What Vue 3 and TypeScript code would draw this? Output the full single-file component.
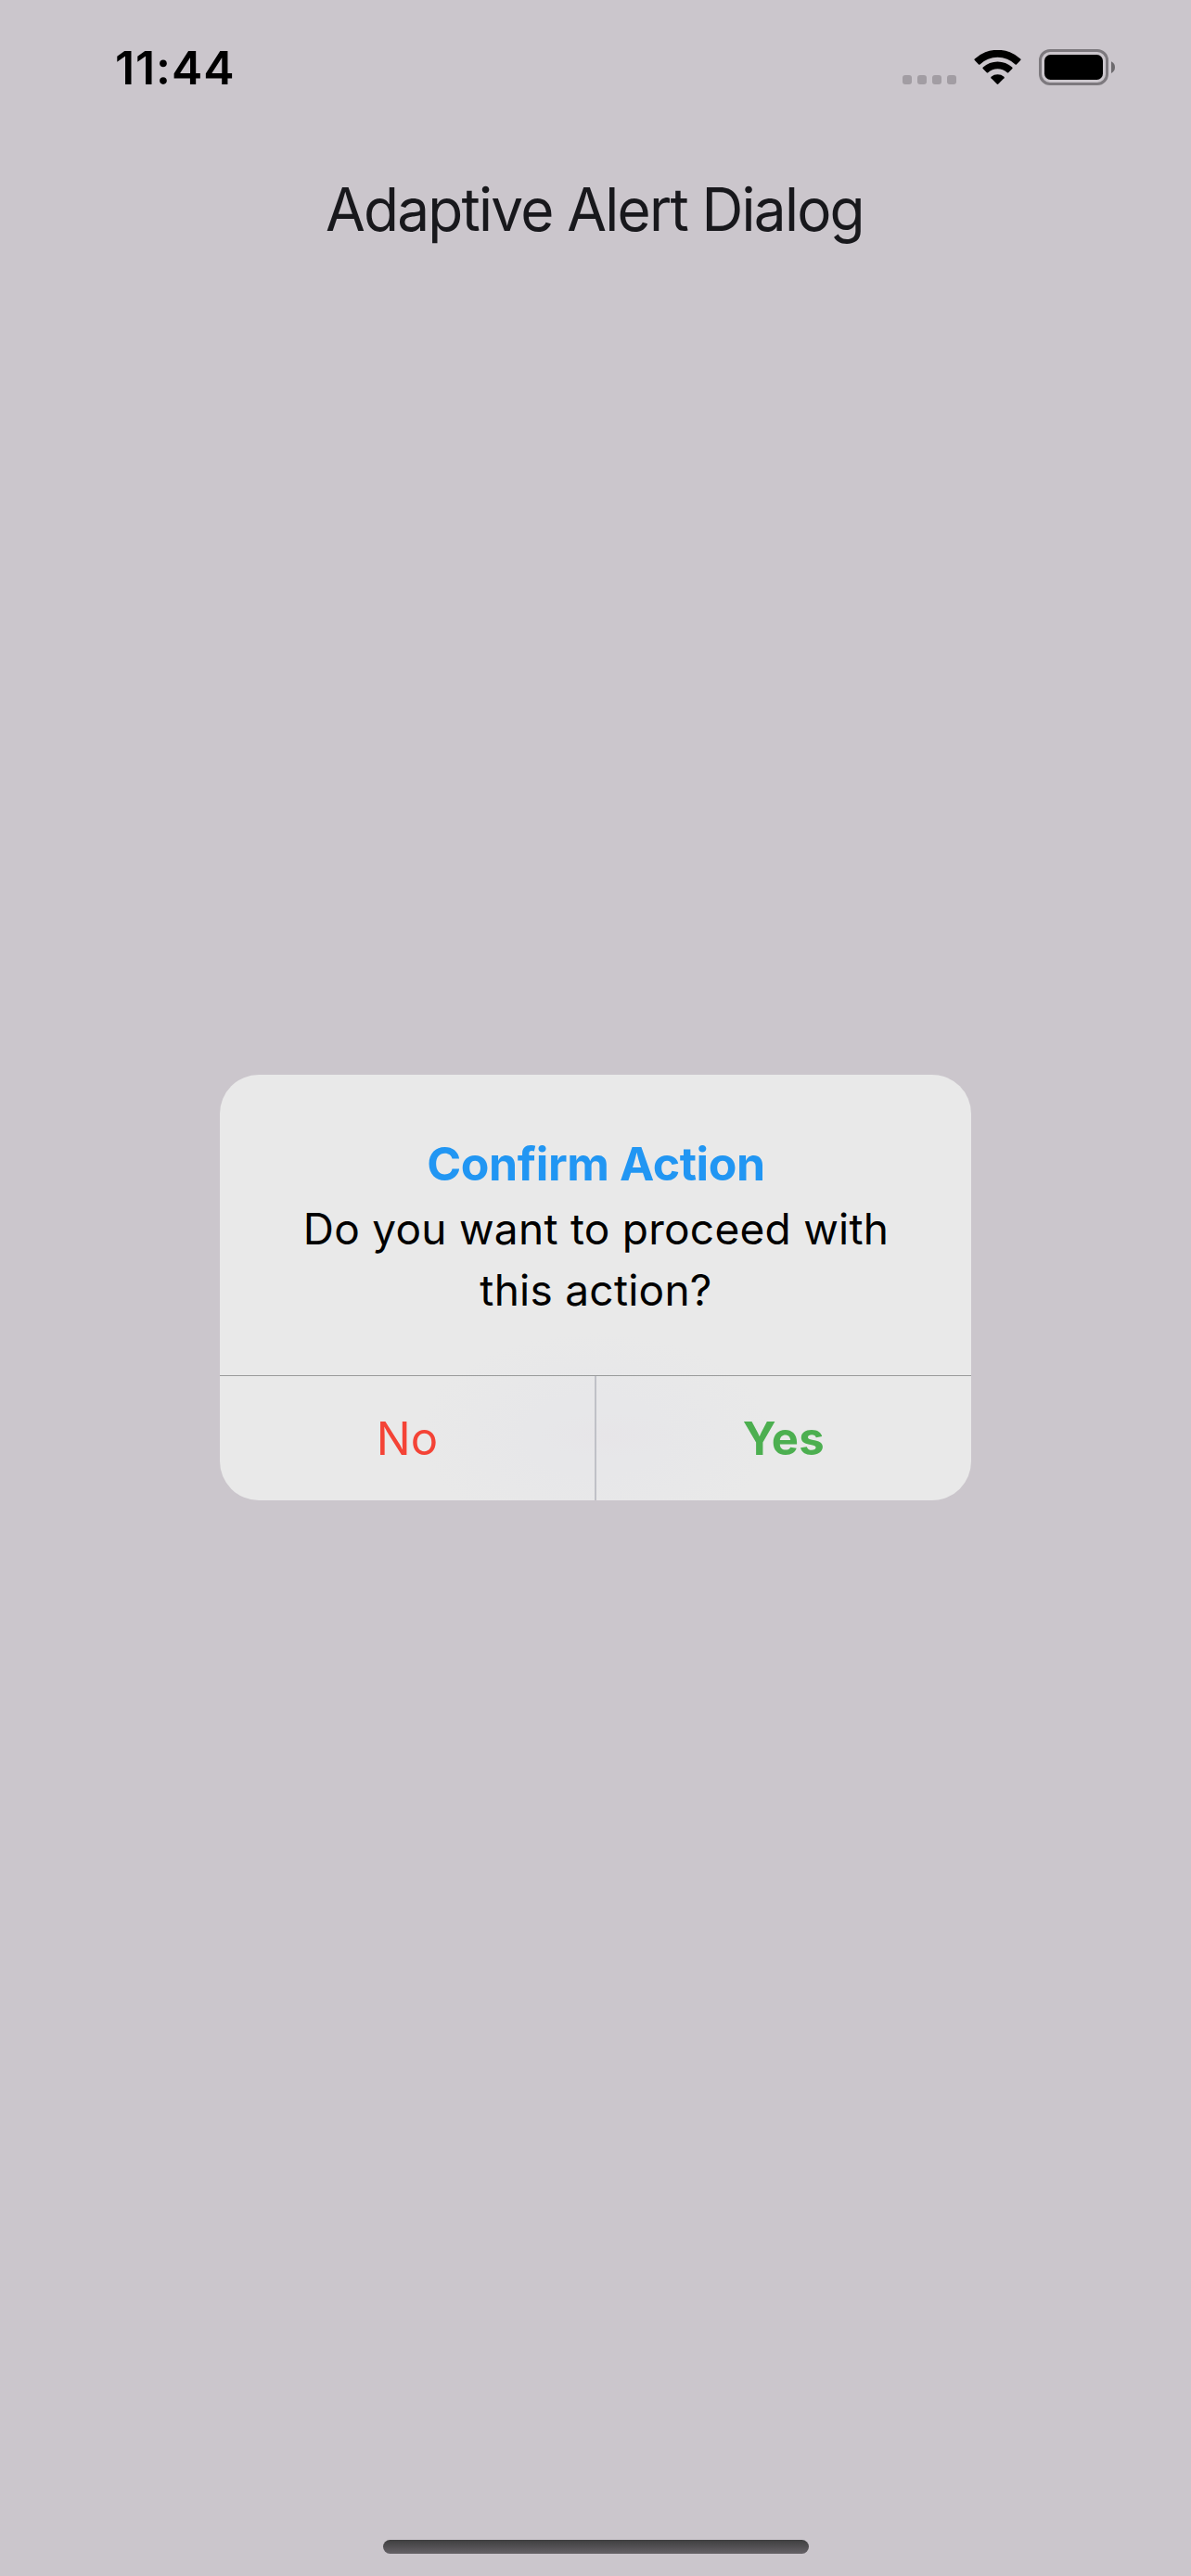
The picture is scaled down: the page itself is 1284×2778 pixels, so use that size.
<script setup lang="ts">
interface DialogAction {
  label: string
  kind: 'cancel' | 'confirm'
}

const time = '11:44'
const screenTitle = 'Adaptive Alert Dialog'
const actions: DialogAction[] = [
  { label: 'No', kind: 'cancel' },
  { label: 'Yes', kind: 'confirm' },
]
</script>

<template>
  <div class="screen">
    <header class="status-bar">
      <span class="time">{{ time }}</span>
      <div class="indicators">
        <div class="cellular">
          <i v-for="n in 4" :key="n" class="dot"></i>
        </div>
        <svg class="wifi" width="52" height="38" viewBox="0 0 52 38" aria-hidden="true">
          <path d="M.8 11.1Q0 10.4.8 9.6A36 36 0 0 1 50.2 9.6Q51 10.4 50.2 11.1L45.9 15.4Q45.3 16 44.6 15.4A27.4 27.4 0 0 0 6.4 15.4Q5.7 16 5.1 15.4Z" />
          <path d="M9.6 20.1Q9 19.3 9.8 18.6A23.2 23.2 0 0 1 41.2 18.6Q42 19.3 41.4 20.1L37.2 24.3Q36.5 24.9 35.8 24.3A15 15 0 0 0 15.2 24.3Q14.5 24.9 13.8 24.3Z" />
          <path d="M18.5 30.2Q17.8 29.4 18.6 28.7A10.8 10.8 0 0 1 32.4 28.7Q33.2 29.4 32.5 30.2L26.3 36.6Q25.5 37.4 24.7 36.6Z" />
        </svg>
        <svg class="battery" width="82" height="39" viewBox="0 0 82 39" aria-hidden="true">
          <rect x="1.5" y="1.5" width="72" height="36" rx="10.5" fill="none" stroke="#7d797e" stroke-width="3" />
          <rect x="6" y="6" width="63" height="27" rx="6.5" />
          <path d="M78 13.2Q82 15.2 82 19.6Q82 24 78 26Z" fill="#6d6a6e" />
        </svg>
      </div>
    </header>

    <div class="app-bar">
      <h1 class="app-title">{{ screenTitle }}</h1>
    </div>

    <main class="stage">
      <section class="dialog" role="alertdialog">
        <div class="message">
          <h2 class="dialog-title">Confirm Action</h2>
          <p class="dialog-text">Do you want to proceed with<br />this action?</p>
        </div>
        <div class="actions">
          <button v-for="a in actions" :key="a.label" type="button" class="action" :class="a.kind">
            {{ a.label }}
          </button>
        </div>
      </section>
    </main>

    <footer class="home">
      <div class="home-bar"></div>
    </footer>
  </div>
</template>

<style>
body {
  margin: 0;
  background: #cbc6cc;
}
</style>

<style scoped>
.screen {
  box-sizing: border-box;
  width: 1284px;
  height: 2778px;
  display: flex;
  flex-direction: column;
  background: #cbc6cc;
  color: #000;
  font-family: Inter, 'Liberation Sans', sans-serif;
}

.status-bar {
  box-sizing: border-box;
  height: 141px;
  flex: none;
  display: flex;
  justify-content: space-between;
  align-items: flex-start;
  padding: 43px 82px 0 124px;
}

.time {
  font-size: 50px;
  font-weight: 600;
  line-height: 60px;
  letter-spacing: 0.9px;
}

.indicators {
  display: flex;
  align-items: flex-start;
  padding-top: 10px;
}

.cellular {
  display: flex;
  gap: 6px;
  padding-top: 28px;
}

.dot {
  width: 10px;
  height: 10px;
  border-radius: 3px;
  background: #a29da3;
}

.wifi {
  margin: 1px 18px 0 19px;
}

.battery {
  display: block;
}

.app-bar {
  height: 168px;
  flex: none;
  display: flex;
  justify-content: center;
  padding: 45px 2px 0 0;
  box-sizing: border-box;
}

.app-title {
  margin: 0;
  font-size: 64px;
  font-weight: 400;
  line-height: 80px;
  letter-spacing: -1.85px;
  color: #18181c;
  white-space: nowrap;
  transform: scaleX(0.97);
}

.stage {
  flex: 1;
  display: flex;
  flex-direction: column;
  align-items: center;
  padding-top: 850px;
}

.dialog {
  width: 810px;
  height: 459px;
  display: flex;
  flex-direction: column;
  overflow: hidden;
  border-radius: 42px;
  background:
    radial-gradient(ellipse 75px 24px at 418px 389px, #e7e5e8, rgba(231, 229, 232, 0)),
    radial-gradient(ellipse 190px 110px at 405px 389px, #e7e7e9 40%, rgba(233, 233, 233, 0)),
    #e9e9e9;
}

.message {
  box-sizing: border-box;
  height: 325px;
  padding: 63px 0 0 1px;
  border-bottom: 1px solid #999b9b;
  text-align: center;
}

.dialog-title {
  margin: 0 0 4px;
  font-size: 50px;
  font-weight: 700;
  line-height: 66px;
  letter-spacing: -0.4px;
  color: #2196f3;
}

.dialog-text {
  margin: 0;
  font-size: 46px;
  line-height: 66px;
  letter-spacing: 0.26px;
}

.actions {
  flex: 1;
  display: flex;
}

.action {
  box-sizing: border-box;
  flex: 1 1 0;
  border: 0;
  padding: 2px 0 0;
  background: none;
  font: 400 49px/132px Inter, 'Liberation Sans', sans-serif;
}

.action + .action {
  border-left: 2px solid #c0c1c7;
}

.cancel {
  color: #f44336;
}

.confirm {
  color: #4caf50;
  font-weight: 700;
  letter-spacing: 0.4px;
}

.home {
  height: 39px;
  flex: none;
  display: flex;
  justify-content: center;
}

.home-bar {
  width: 459px;
  height: 15px;
  border-radius: 8px;
  background: linear-gradient(#3e3e3f, #666267);
}
</style>
